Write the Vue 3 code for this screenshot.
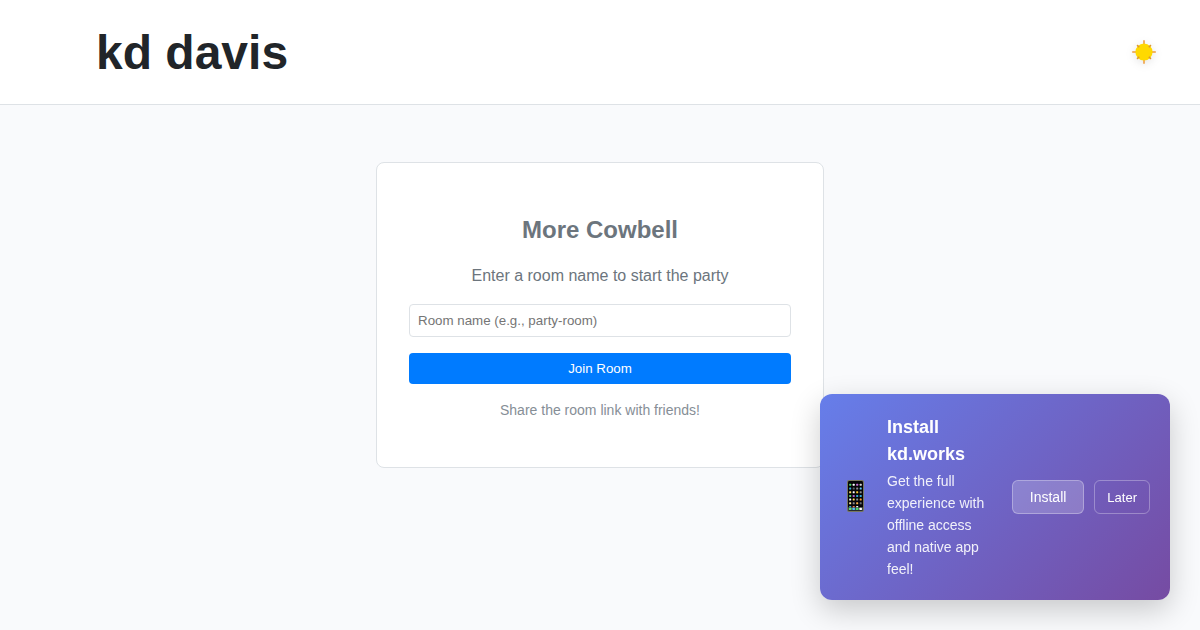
<script setup>
import { ref } from 'vue'

const room = ref('')
const showInstall = ref(true)

const straight = [0, 90, 180, 270]
const diagonal = [45, 135, 225, 315]

const apps = [
  ['#4cd964', '#ffffff', '#c86dd7', '#d8d8d8'],
  ['#34aadc', '#5a6068', '#8e8e93', '#5ac8fa'],
  ['#ffe066', '#ffffff', '#ffcc33', '#8e8e93'],
  ['#5ad17a', '#b35fc9', '#34aadc', '#34aadc'],
  ['#ffffff', '#ffd95a', '#8e8e93', '#ff9f2e'],
  ['#ffe9a0', '#8e8e93', '#ffb347', '#6b6f76'],
  ['#34aadc', '#ff7a45', '#ffffff', '#000000'],
]
const dock = ['#5ee06b', '#4fc3f7', '#4cd964', '#ffffff']
</script>

<template>
  <div class="page">
    <header class="header">
      <h1 class="brand">kd davis</h1>
      <button class="theme" type="button" aria-label="Toggle theme">
        <svg class="sun" viewBox="0 0 24 24" width="24" height="24" aria-hidden="true">
          <path
            v-for="angle in straight"
            :key="angle"
            d="M11.1 0.2h1.8v4h-1.8z"
            fill="#f0a955"
            :transform="`rotate(${angle} 12 12)`"
          />
          <circle cx="12" cy="12" r="8.6" fill="#ffd900" />
          <path
            v-for="angle in diagonal"
            :key="angle"
            d="M11.2 2.2h1.6v3h-1.6z"
            fill="#dd9a2b"
            :transform="`rotate(${angle} 12 12)`"
          />
        </svg>
      </button>
    </header>

    <main class="main">
      <form class="card" @submit.prevent>
        <h2 class="card-title">More Cowbell</h2>
        <label class="lead" for="room">Enter a room name to start the party</label>
        <input id="room" v-model="room" class="field" type="text" placeholder="Room name (e.g., party-room)" />
        <button class="join" type="submit">Join Room</button>
        <p class="hint">Share the room link with friends!</p>
      </form>
    </main>

    <aside v-if="showInstall" class="toast">
      <svg class="phone" viewBox="0 0 32 34" width="32" height="34" aria-hidden="true">
        <rect x="7" y="0" width="17" height="32" rx="2" fill="#77775f" />
        <rect x="8" y="1" width="15" height="30" rx="1.4" fill="#050507" />
        <g v-for="(row, r) in apps" :key="r">
          <rect
            v-for="(color, c) in row"
            :key="c"
            :x="9.2 + c * 3.5"
            :y="3.8 + r * 3.7"
            width="2"
            height="2"
            rx="0.5"
            :fill="color"
          />
        </g>
        <rect x="8" y="27.2" width="15" height="3.4" fill="#414a4a" />
        <rect
          v-for="(color, c) in dock"
          :key="`dock-${c}`"
          :x="9 + c * 3.5"
          y="27.7"
          width="2.4"
          height="2.4"
          rx="0.5"
          :fill="color"
        />
      </svg>
      <div class="toast-text">
        <h3 class="toast-title">Install kd.works</h3>
        <p class="toast-body">Get the full experience with offline access and native app feel!</p>
      </div>
      <div class="actions">
        <button class="action primary" type="button">Install</button>
        <button class="action" type="button" @click="showInstall = false">Later</button>
      </div>
    </aside>
  </div>
</template>

<style>
body {
  background: #f9fafc;
}
</style>

<style scoped>
.page {
  min-height: 100vh;
  background: #f9fafc;
  color: #212529;
  font-family: "Liberation Sans", Arial, sans-serif;
}

h1,
h2,
h3,
p {
  margin: 0;
}

button,
input {
  font-family: inherit;
  box-sizing: border-box;
}

button {
  cursor: pointer;
}

.header {
  display: flex;
  align-items: center;
  justify-content: space-between;
  padding: 15px 40px 15px 96px;
  background: #fff;
  border-bottom: 1px solid #dee2e6;
}

.brand {
  padding-top: 2px;
  font-size: 48px;
  line-height: 72px;
}

.theme {
  display: flex;
  padding: 4px;
  border: 0;
  background: none;
}

.sun {
  filter: drop-shadow(0 2px 4px rgba(0, 0, 0, 0.1));
}

.main {
  padding: 57px 16px;
}

.card {
  display: flex;
  flex-direction: column;
  gap: 16px;
  box-sizing: border-box;
  max-width: 448px;
  margin: 0 auto;
  padding: 49px 32px 47px;
  border: 1px solid #dee2e6;
  border-radius: 8px;
  background: #fff;
  text-align: center;
}

.card-title {
  color: #6c757d;
  font-size: 24px;
  line-height: 36px;
}

.lead {
  color: #6c757d;
  font-size: 16px;
  line-height: 24px;
}

.field {
  width: 100%;
  height: 33px;
  padding: 8px;
  border: 1px solid #dee2e6;
  border-radius: 4px;
  background: #fff;
  color: #212529;
}

.field::placeholder {
  color: #757575;
}

.join {
  height: 31px;
  border: 0;
  border-radius: 4px;
  background: #007bff;
  color: #fff;
}

.hint {
  color: #868e96;
  font-size: 14px;
  line-height: 20px;
}

.toast {
  position: fixed;
  right: 30px;
  bottom: 30px;
  display: flex;
  align-items: center;
  gap: 15px;
  box-sizing: border-box;
  width: 350px;
  padding: 20px;
  border-radius: 12px;
  background: linear-gradient(135deg, #667eea 0%, #764ba2 100%);
  box-shadow: 0 10px 30px rgba(0, 0, 0, 0.2);
  color: #fff;
}

.phone {
  flex: none;
}

.toast-text {
  flex: 1;
}

.toast-title {
  margin-bottom: 2px;
  font-size: 18px;
  line-height: 27px;
}

.toast-body {
  font-size: 14px;
  line-height: 22px;
  opacity: 0.9;
}

.actions {
  display: flex;
  gap: 10px;
}

.action {
  height: 34px;
  padding: 0 12px;
  border: 1px solid rgba(255, 255, 255, 0.3);
  border-radius: 6px;
  background: none;
  color: #fff;
  font-size: 13px;
}

.primary {
  padding: 0 17px;
  background: rgba(255, 255, 255, 0.2);
  font-size: 14px;
}
</style>
